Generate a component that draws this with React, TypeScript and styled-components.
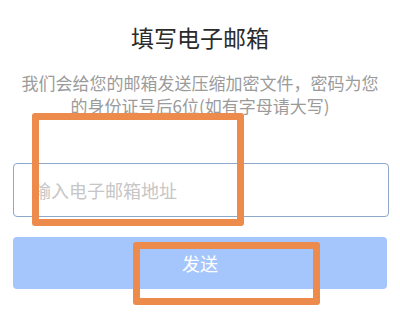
import { createGlobalStyle, styled } from 'styled-components'

const GlobalStyle = createGlobalStyle`
  html,
  body {
    margin: 0;
    padding: 0;
    background: #ffffff;
  }

  body {
    font-family: 'Noto Sans CJK SC', 'Noto Sans', sans-serif;
  }
`

export default function App() {
  return (
    <>
      <GlobalStyle />
      <StyledPage>
        <StyledTitle>填写电子邮箱</StyledTitle>
        <StyledHint>
          我们会给您的邮箱发送压缩加密文件，密码为您
          <br />
          的身份证号后6位(如有字母请大写)
        </StyledHint>
        <StyledForm>
          <StyledInput placeholder={'输入电子邮箱地址'} type={'email'} />
          <StyledButton type={'button'}>发送</StyledButton>
        </StyledForm>

        {/* annotation marks drawn over the screenshot */}
        <StyledMark $left={32} $top={113} $width={212} $height={113} />
        <StyledMark $left={133} $top={242} $width={187} $height={63} />
      </StyledPage>
    </>
  )
}

const StyledPage = styled.div`
  position: relative;
  display: flex;
  flex-direction: column;
  align-items: center;
  width: 400px;
  height: 332px;
  padding: 22px 0 0 0;
  box-sizing: border-box;
  overflow: hidden;
`

const StyledTitle = styled.h2`
  margin: 0;
  font-size: 23px;
  font-weight: 400;
  line-height: 31px;
  color: #2b2b2b;
`

const StyledHint = styled.p`
  margin: 18px 0 0 0;
  font-size: 17px;
  font-weight: 400;
  line-height: 23px;
  color: #9b9b9b;
  text-align: center;
`

const StyledForm = styled.form`
  display: flex;
  flex-direction: column;
  gap: 20px;
  align-self: stretch;
  margin: 46px 11px 0 13px;
`

const StyledInput = styled.input`
  height: 54px;
  padding: 0 0 0 19px;
  box-sizing: border-box;
  border: 1px solid #8ea8c9;
  border-radius: 4px;
  outline: none;
  background: #ffffff;
  font-family: 'Noto Sans CJK SC', 'Noto Sans', sans-serif;
  font-size: 18px;
  color: #333333;

  &::placeholder {
    color: #c6c6c6;
  }
`

const StyledButton = styled.button`
  height: 52px;
  margin: 0 2px 0 0;
  border: none;
  border-radius: 4px;
  background: #a4c6fc;
  font-family: 'Noto Sans CJK SC', 'Noto Sans', sans-serif;
  font-size: 18px;
  color: #ffffff;
`

const StyledMark = styled.div<{ $left: number; $top: number; $width: number; $height: number }>`
  position: absolute;
  left: ${({ $left }) => $left}px;
  top: ${({ $top }) => $top}px;
  width: ${({ $width }) => $width}px;
  height: ${({ $height }) => $height}px;
  box-sizing: border-box;
  border: 7px solid #ec8b4b;
  border-radius: 3px;
  pointer-events: none;
`
